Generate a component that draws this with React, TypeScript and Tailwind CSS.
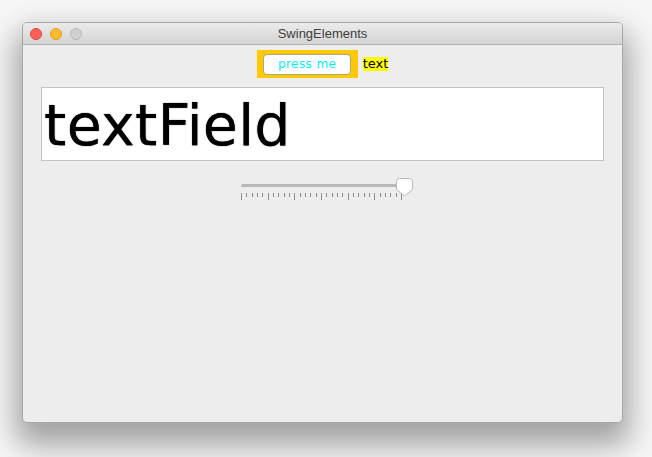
import React from "react";

function Thumb() {
  return (
    <svg width="17" height="19" viewBox="0 0 17 19" className="absolute left-[155px] top-[0px]">
      <path
        d="M3.5 0.5 H13.5 A3 3 0 0 1 16.5 3.5 V11.5 L8.5 18 L0.5 11.5 V3.5 A3 3 0 0 1 3.5 0.5 Z"
        fill="#ffffff"
        stroke="#b8b8b8"
      />
    </svg>
  );
}

function Ticks() {
  const lines = [];
  for (let i = 0; i <= 30; i++) {
    const x = Math.round(i * (160 / 30)) + 0.5;
    const major = i % 5 === 0;
    lines.push(
      <line key={i} x1={x} x2={x} y1={0} y2={major ? 7 : 4} stroke="#8c8c8c" strokeWidth={1} />
    );
  }
  return (
    <svg width="162" height="8" viewBox="0 0 162 8" className="block">
      {lines}
    </svg>
  );
}

export default function App() {
  return (
    <div className="w-[652px] h-[457px] bg-[#f6f6f6] pt-[22px] pl-[22px] overflow-hidden">
      <div className="w-[601px] h-[401px] rounded-[5px] border border-[#a8a8a8] bg-[#ededed] shadow-[0_16px_30px_6px_rgba(0,0,0,0.35)] flex flex-col overflow-hidden">
        <div className="relative h-[22px] shrink-0 bg-gradient-to-b from-[#ebebeb] to-[#d4d4d4] border-b border-[#b1b1b1] flex items-center">
          <div className="flex items-center gap-[8px] pl-[7px]">
            <div className="w-[12px] h-[12px] rounded-full bg-[#fe5f57] border border-[#e0443e]" />
            <div className="w-[12px] h-[12px] rounded-full bg-[#febc2e] border border-[#dea123]" />
            <div className="w-[12px] h-[12px] rounded-full bg-[#d0d0d0] border border-[#b8b8b8]" />
          </div>
          <div className="absolute inset-0 flex items-center justify-center text-[13px] text-[#3e3e3e] font-['Liberation_Sans',sans-serif]">
            SwingElements
          </div>
        </div>
        <div className="flex flex-col">
          <div className="flex items-center justify-center gap-[5px] mt-[5px]">
            <div className="w-[101px] h-[28px] bg-[#ffc800] flex items-center justify-center">
              <div className="w-[88px] h-[21px] bg-white rounded-[4px] border border-[#b4a47c] flex items-center justify-center text-[12px] tracking-[0.4px] text-[#00f0ff] font-['DejaVu_Sans',sans-serif]">
                press me
              </div>
            </div>
            <div className="h-[14px] bg-[#ffff00] text-[13px] leading-[14px] text-black font-['DejaVu_Sans',sans-serif]">
              text
            </div>
          </div>
          <div className="mt-[9px] mx-[18px] h-[74px] bg-white border border-[#c2c2c2] flex items-center pl-[2px] pt-[3px] overflow-hidden">
            <span className="text-[57px] leading-none text-black font-['DejaVu_Sans',sans-serif] tracking-[0.3px] [text-shadow:0_0_1px_#000]">
              textField
            </span>
          </div>
          <div className="ml-[218px] mt-[17px] relative w-[175px] h-[24px]">
            <div className="pt-[6px]">
              <div className="w-[164px] h-[3px] rounded-full bg-[#b9b9b9]" />
            </div>
            <div className="mt-[6px]">
              <Ticks />
            </div>
            <Thumb />
          </div>
        </div>
      </div>
    </div>
  );
}
